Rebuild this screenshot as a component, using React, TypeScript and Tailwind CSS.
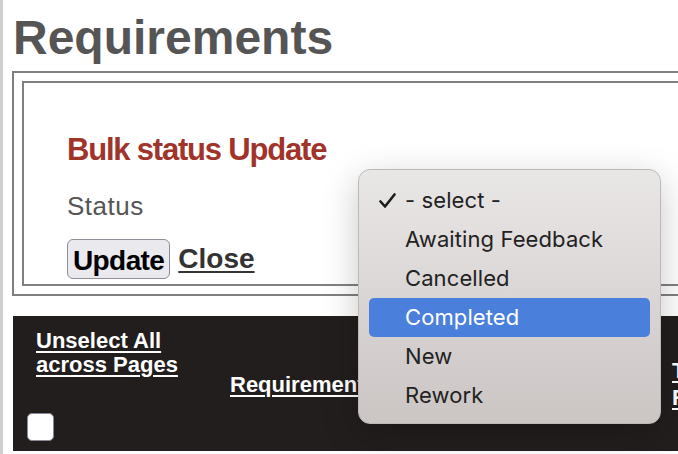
import React from 'react';

const statusOptions = ['- select -', 'Awaiting Feedback', 'Cancelled', 'Completed', 'New', 'Rework'];

const CheckMark: React.FC = () => (
  <svg className="absolute left-[10px] top-[12px]" width="17" height="16" viewBox="0 0 17 16" fill="none">
    <path d="M1.5 8.5 L6 13.5 L15.5 1.5" stroke="#1c1c1c" strokeWidth="2.6" strokeLinecap="round" strokeLinejoin="round" />
  </svg>
);

const StatusMenu: React.FC<{ selected: string; active: string }> = ({ selected, active }) => (
  <div className="absolute left-[355px] top-[169px] w-[303px] h-[255px] rounded-[12px] border border-[#bdb8b7] bg-gradient-to-b from-[#e9e7e6] to-[#cbc5c4] shadow-[0_10px_36px_rgba(0,0,0,0.22)] pt-[11px] pb-[10px] px-[10px]">
    {statusOptions.map((opt) => (
      <div
        key={opt}
        className={`relative h-[39px] flex items-center pl-[36px] rounded-[5px] text-[22px] tracking-[0.1px] font-['Inter',sans-serif] ${
          opt === active ? 'bg-[#4a80dc] text-white' : 'text-[#222]'
        }`}
      >
        {opt === selected && <CheckMark />}
        {opt}
      </div>
    ))}
  </div>
);

export default function App() {
  return (
    <div className="relative w-[678px] h-[454px] overflow-hidden bg-white border-l-[3px] border-[#d0d0d0] font-['Liberation_Sans',Arial,sans-serif]">
      <div className="pl-[9px]">
        <h1 className="pl-[1px] pt-[11px] pb-[6px] text-[48px] leading-[54px] font-bold text-[#555]">Requirements</h1>

        {/* bulk update panel */}
        <div className="w-[760px] border-2 border-[#808080] p-[8px]">
          <div className="border-2 border-[#808080] pt-[49px] pb-[5px] pl-[43px]">
            <h2 className="text-[31px] leading-[36px] font-bold tracking-[-1.2px] text-[#a0342a]">Bulk status Update</h2>
            <div className="mt-[23px] text-[26px] leading-[30px] tracking-[0.5px] text-[#555]">Status</div>
            <div className="mt-[18px] flex items-center h-[40px]">
              <button className="h-[40px] px-[5px] rounded-[6px] border-[1.5px] border-[#8e8e99] bg-[#e9e9ee] text-[28px] font-bold tracking-[-0.6px] text-black">
                Update
              </button>
              <a className="ml-[8px] text-[28px] font-bold text-[#333] underline decoration-2 underline-offset-[3px]">Close</a>
            </div>
          </div>
        </div>

        {/* table header */}
        <div className="mt-[20px] ml-[1px] w-[760px] h-[135px] bg-[#231e1e] flex text-white font-bold text-[22px]">
          <div className="w-[192px] pt-[13px] flex flex-col">
            <a className="pl-[23px] leading-[24px] underline underline-offset-[3px]">
              Unselect All
              <br />
              across Pages
            </a>
            <div className="mt-auto mb-[10px] ml-[14px] w-[27px] h-[28px] rounded-[5px] border-[1.5px] border-[#8a8799] bg-white" />
          </div>
          <div className="w-[467px] flex items-center pl-[25px] pt-[2px]">
            <a className="leading-[24px] underline underline-offset-[3px]">Requirement</a>
          </div>
          <div className="flex items-center">
            <a className="leading-[27px] underline underline-offset-[3px]">
              Type
              <br />
              Req
            </a>
          </div>
        </div>
      </div>

      <StatusMenu selected="- select -" active="Completed" />
    </div>
  );
}
